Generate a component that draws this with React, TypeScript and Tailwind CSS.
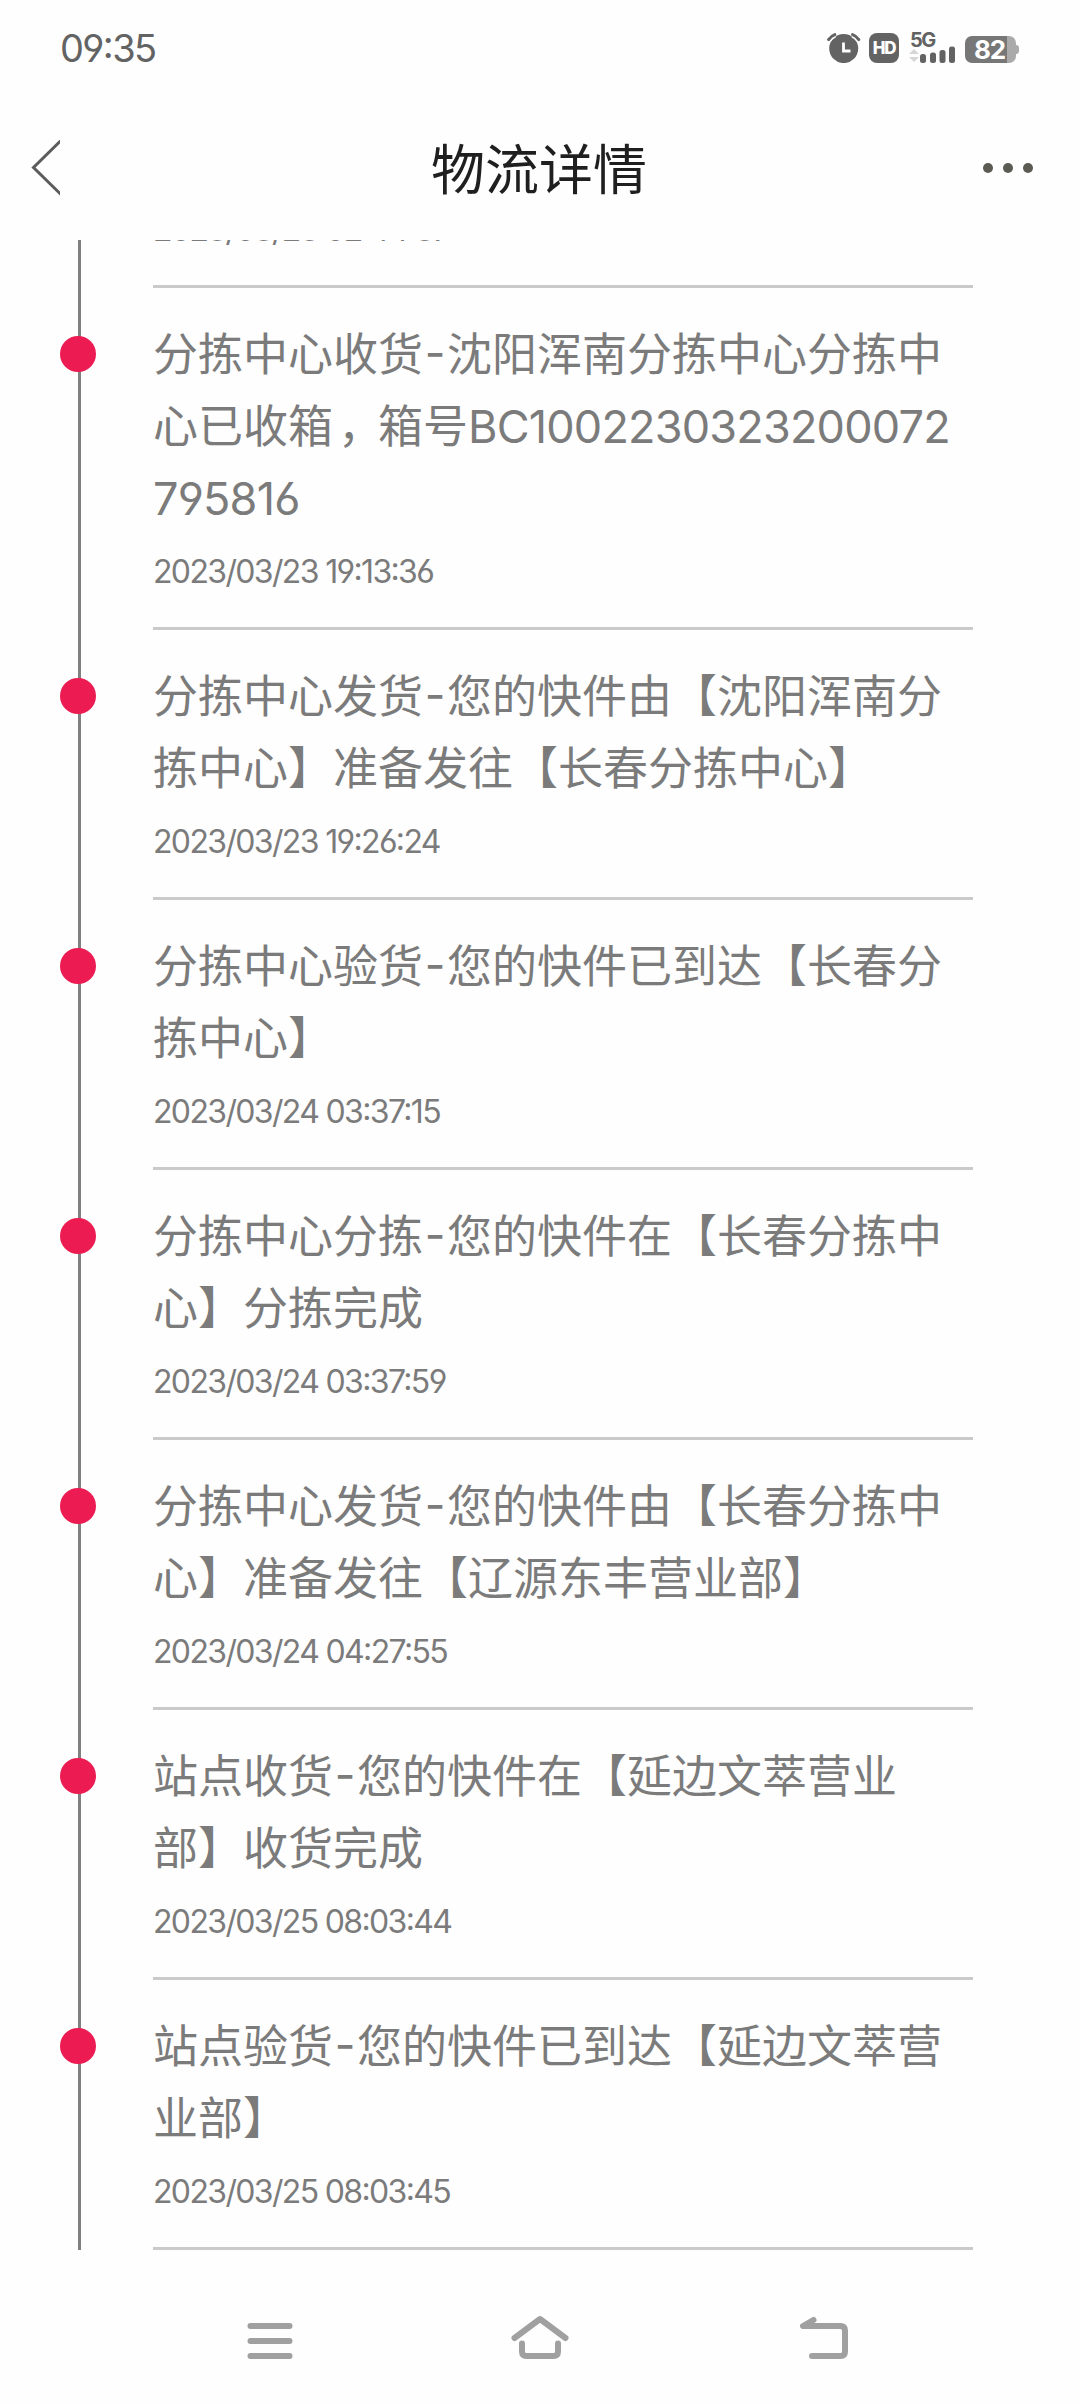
import React from 'react';

interface TrackItem {
    lines: string[];
    time: string;
}

const items: TrackItem[] = [
    {
        lines: ['分拣中心收货-沈阳浑南分拣中心分拣中', '心已收箱，箱号BC1002230323200072', '795816'],
        time: '2023/03/23 19:13:36',
    },
    {
        lines: ['分拣中心发货-您的快件由【沈阳浑南分', '拣中心】准备发往【长春分拣中心】'],
        time: '2023/03/23 19:26:24',
    },
    {
        lines: ['分拣中心验货-您的快件已到达【长春分', '拣中心】'],
        time: '2023/03/24 03:37:15',
    },
    {
        lines: ['分拣中心分拣-您的快件在【长春分拣中', '心】分拣完成'],
        time: '2023/03/24 03:37:59',
    },
    {
        lines: ['分拣中心发货-您的快件由【长春分拣中', '心】准备发往【辽源东丰营业部】'],
        time: '2023/03/24 04:27:55',
    },
    {
        lines: ['站点收货-您的快件在【延边文萃营业', '部】收货完成'],
        time: '2023/03/25 08:03:44',
    },
    {
        lines: ['站点验货-您的快件已到达【延边文萃营', '业部】'],
        time: '2023/03/25 08:03:45',
    },
];

const StatusBar: React.FC = () => (
    <div className="flex h-24 items-center justify-between pl-[60px] pr-[61px] text-[#636363]">
        <span className="text-[38px] leading-none tracking-[-1.6px] [font-feature-settings:'cv04','case']">09:35</span>
        <div className="flex h-[30px]">
            {/* Réveil */}
            <svg width="34" height="30" viewBox="0 0 34 30" fill="none">
                <circle cx="16.7" cy="15.6" r="14.5" fill="#636363" />
                <path d="M1.6 6.6Q4 3 7.8 1.6M31.8 6.6Q29.4 3 25.6 1.6" stroke="#fefefe" strokeWidth="6" />
                <path d="M1.6 6.6Q4 3 7.8 1.6M31.8 6.6Q29.4 3 25.6 1.6" stroke="#636363" strokeWidth="3" strokeLinecap="round" />
                <path d="M16.5 9.5V18H23.5" stroke="#fff" strokeWidth="2.8" />
            </svg>
            <div className="ml-2 flex h-[30px] w-[30px] items-center justify-center rounded-lg bg-[#636363] text-[17px] font-extrabold leading-none tracking-[-1.2px] text-white">
                HD
            </div>
            {/* Réseau */}
            <div className="ml-[10px] flex w-[46px] flex-col">
                <span className="h-[13px] pl-[1px] text-[20px] font-bold leading-[15px] tracking-[-1.5px]">5G</span>
                <svg width="46" height="17" viewBox="0 0 46 17">
                    <path d="M0 8L5 3L10 8ZM0 11H10L5 16Z" fill="#d6d6d6" />
                    <g fill="#636363">
                        <rect x="11" y="8" width="6" height="9" rx="2.5" />
                        <rect x="21" y="6.5" width="6" height="10.5" rx="2.5" />
                        <rect x="30.5" y="4" width="6" height="13" rx="2.5" />
                        <rect x="40" y="0.5" width="6" height="16.5" rx="2.5" />
                    </g>
                </svg>
            </div>
            {/* Batterie */}
            <div className="ml-[10px] mt-[3px] flex h-[27px] items-center">
                <div className="flex h-[27px] w-[51px] items-center justify-center rounded-[7px] bg-linear-to-r from-[#777777] from-[82%] to-[#aaaaaa] to-[82%] pr-[2px] text-[26px] font-bold leading-none tracking-[-1.2px] text-white">
                    82
                </div>
                <div className="h-[9px] w-[3px] rounded-r-sm bg-[#aaaaaa]" />
            </div>
        </div>
    </div>
);

const Header: React.FC = () => (
    <header className="flex h-36 items-center justify-between pl-[30px] pr-[47px]">
        <svg width="30" height="56" viewBox="0 0 30 56" fill="none">
            <path d="M31 0.5L3.5 27.5L31 54.5" stroke="#5c5c5c" strokeWidth="3" />
        </svg>
        <h1 className="ml-[35px] pt-[5px] text-[54px] leading-[60px] text-[#1f1f1f]">物流详情</h1>
        <div className="flex gap-[10px]">
            <i className="h-[10px] w-[10px] rounded-full bg-[#5b5b53]" />
            <i className="h-[10px] w-[10px] rounded-full bg-[#5b5b53]" />
            <i className="h-[10px] w-[10px] rounded-full bg-[#5b5b53]" />
        </div>
    </header>
);

// Les chiffres et lettres latines sont un peu plus serrés que le chinois
const Line: React.FC<{ text: string }> = ({ text }) => (
    <p className="h-[72px] whitespace-nowrap">
        {text.split(/([A-Z0-9]+|-|，)/).map((part, i) => {
            if (part === '-') {
                return (
                    <span key={i} className="inline-block w-[24px] text-center">
                        -
                    </span>
                );
            }
            if (part === '，') {
                return (
                    <span key={i} className="relative left-[5px]">
                        ，
                    </span>
                );
            }
            return /^[A-Z0-9]+$/.test(part) ? (
                <span key={i} className="tracking-[-0.8px]">
                    {part}
                </span>
            ) : (
                part
            );
        })}
    </p>
);

const TrackTime: React.FC<{ time: string }> = ({ time }) => (
    <p className="h-[72px] whitespace-nowrap text-[32px] leading-[76px] tracking-[-1.65px]">{time}</p>
);

const TrackRow: React.FC<{ item: TrackItem }> = ({ item }) => (
    <li className="flex shrink-0">
        <div className="relative ml-[78px] w-[3px] bg-[#808080]">
            <span className="absolute -left-[18px] top-12 h-9 w-9 rounded-full bg-[#ec1b52]" />
        </div>
        <div className="ml-[72px] w-[820px] border-b-[3px] border-[#cacaca] pb-[21px] pt-[30px]">
            {item.lines.map((line) => (
                <Line key={line} text={line} />
            ))}
            <TrackTime time={item.time} />
        </div>
    </li>
);

const NavBar: React.FC = () => (
    <nav className="flex flex-1 items-start pl-[247px] pt-[65px]">
        <svg width="46" height="46" viewBox="0 0 46 46" fill="#a0a0a0">
            <rect x="0.5" y="8" width="45" height="6" rx="3" />
            <rect x="0.5" y="23" width="45" height="6" rx="3" />
            <rect x="0.5" y="38" width="45" height="6" rx="3" />
        </svg>
        <svg className="ml-[218px]" width="58" height="46" viewBox="0 0 58 46" fill="none" stroke="#a0a0a0" strokeWidth="6" strokeLinecap="round" strokeLinejoin="round">
            <path d="M3.5 23L29 4L54.5 23" />
            <path d="M11 28.5V36.5Q11 41 15.5 41H42.5Q47 41 47 36.5V28.5" />
        </svg>
        <svg className="ml-[230px]" width="50" height="46" viewBox="0 0 50 46" fill="none" stroke="#a0a0a0" strokeWidth="6" strokeLinecap="round" strokeLinejoin="round">
            <path d="M14.5 5L4 11H41.5Q46 11 46 15.5V36.5Q46 41 41.5 41H13" />
        </svg>
    </nav>
);

const App: React.FC = () => {
    return (
        <div className="flex h-[2404px] w-[1080px] flex-col overflow-hidden bg-[#fefefe] font-['Inter','Noto_Sans_CJK_SC',sans-serif]">
            <StatusBar />
            <Header />
            <ul className="flex h-[2010px] flex-col justify-end overflow-hidden text-[45px] leading-[73px] text-[#7b7b7b] [font-feature-settings:'cv03','cv04','case']">
                <li className="flex shrink-0">
                    <div className="ml-[78px] w-[3px] bg-[#808080]" />
                    <div className="ml-[72px] w-[820px] border-b-[3px] border-[#cacaca] pb-[21px]">
                        <TrackTime time="2023/03/23 02:44:37" />
                    </div>
                </li>
                {items.map((item) => (
                    <TrackRow key={item.time} item={item} />
                ))}
            </ul>
            <NavBar />
        </div>
    );
};

export default App;
